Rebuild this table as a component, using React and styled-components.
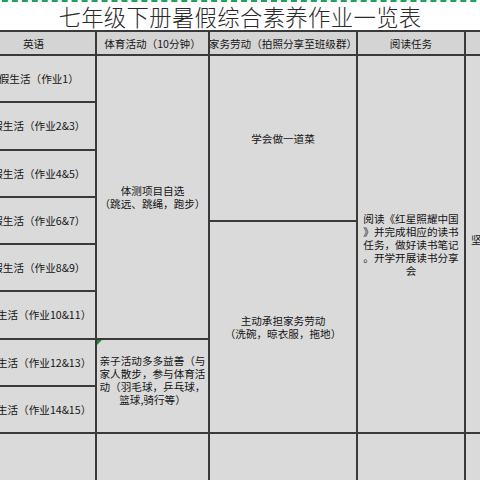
import React from 'react';
import styled, { createGlobalStyle } from 'styled-components';

const GlobalStyle = createGlobalStyle`
  html, body {
    margin: 0;
    padding: 0;
    background: #ffffff;
    overflow: hidden;
  }
  body {
    font-family: "Noto Sans CJK SC", "Noto Sans", sans-serif;
  }
`;

const Page = styled.div`
  width: 480px;
  height: 480px;
  overflow: hidden;
`;

// the sheet: dark grid background shows through the gaps as cell borders
const Sheet = styled.div`
  display: grid;
  grid-template-columns: 123px 111px 146px 106px 100px;
  grid-template-rows: 30px 22px repeat(8, 45.25px) 60px;
  gap: 2px;
  background: #3a3a3a;
  margin-left: -28px;
  width: max-content;
`;

const Title = styled.div`
  grid-column: 1 / -1;
  grid-row: 1;
  background: #ffffff;
  border-top: 2px dashed #23a05c;
  box-sizing: border-box;
  display: flex;
  align-items: center;
  justify-content: center;
  padding-right: 58px;
  padding-top: 1px;
  font-size: 22.4px;
  font-weight: 300;
  color: #2a2a2a;
  letter-spacing: 0.3px;
  line-height: 1;
`;

const Cell = styled.div`
  position: relative;
  grid-column: ${(p) => p.$col};
  grid-row: ${(p) => p.$row};
  background: ${(p) => (p.$head ? '#d4d4d4' : '#dadada')};
  display: flex;
  align-items: center;
  justify-content: ${(p) => (p.$left ? 'flex-start' : 'center')};
  text-align: center;
  padding-left: ${(p) => (p.$left ? '5px' : '0')};
  padding-bottom: ${(p) => p.$lift || 0}px;
  font-size: 10.6px;
  line-height: 13px;
  color: #141414;
  white-space: nowrap;
  overflow: hidden;
`;

// excel's little green error marker in the corner of a cell
const Flag = styled.span`
  position: absolute;
  top: 0;
  left: 0;
  width: 0;
  height: 0;
  border-top: 5px solid #1d8a3e;
  border-right: 5px solid transparent;
`;

const Stack = styled.div`
  grid-column: 3;
  grid-row: 3 / span 8;
  display: flex;
  flex-direction: column;
  gap: 2px;
  background: #3a3a3a;
`;

const Part = styled.div`
  flex: ${(p) => (p.$h ? `0 0 ${p.$h}px` : '1')};
  background: #dadada;
  display: flex;
  align-items: center;
  justify-content: center;
  text-align: center;
  font-size: 10.6px;
  line-height: 13px;
  color: #141414;
  white-space: nowrap;
`;

const heads = ['英语', '体育活动（10分钟）', '家务劳动（拍照分享至班级群）', '阅读任务', ''];

const english = ['1', '2&3', '4&5', '6&7', '8&9', '10&11', '12&13', '14&15'];

const App = () => {
  return (
    <Page>
      <GlobalStyle />
      <Sheet>
        <Title>七年级下册暑假综合素养作业一览表</Title>

        {heads.map((h, i) => (
          <Cell key={i} $head $row={2} $col={i + 1}>
            {h}
          </Cell>
        ))}

        {english.map((n, i) => (
          <Cell key={n} $row={i + 3} $col={1}>
            暑假生活（作业{n}）
          </Cell>
        ))}

        <Cell $row="3 / span 6" $col={2}>
          体测项目自选
          <br />
          （跳远、跳绳，跑步）
        </Cell>
        <Cell $row="9 / span 2" $col={2} $lift={12}>
          <Flag />
          亲子活动多多益善（与
          <br />
          家人散步，参与体育活
          <br />
          动（羽毛球，乒乓球，
          <br />
          篮球,骑行等）
        </Cell>

        <Stack>
          <Part $h={164}>学会做一道菜</Part>
          <Part>
            主动承担家务劳动
            <br />
            （洗碗，晾衣服，拖地）
          </Part>
        </Stack>

        <Cell $row="3 / span 8" $col={4}>
          阅读《红星照耀中国
          <br />
          》并完成相应的读书
          <br />
          任务，做好读书笔记
          <br />
          。开学开展读书分享
          <br />
          会
        </Cell>

        <Cell $row="3 / span 8" $col={5} $left $lift={10}>
          坚持每天练字
        </Cell>

        {[1, 2, 3, 4, 5].map((c) => (
          <Cell key={c} $row={11} $col={c} />
        ))}
      </Sheet>
    </Page>
  );
};

export default App;
